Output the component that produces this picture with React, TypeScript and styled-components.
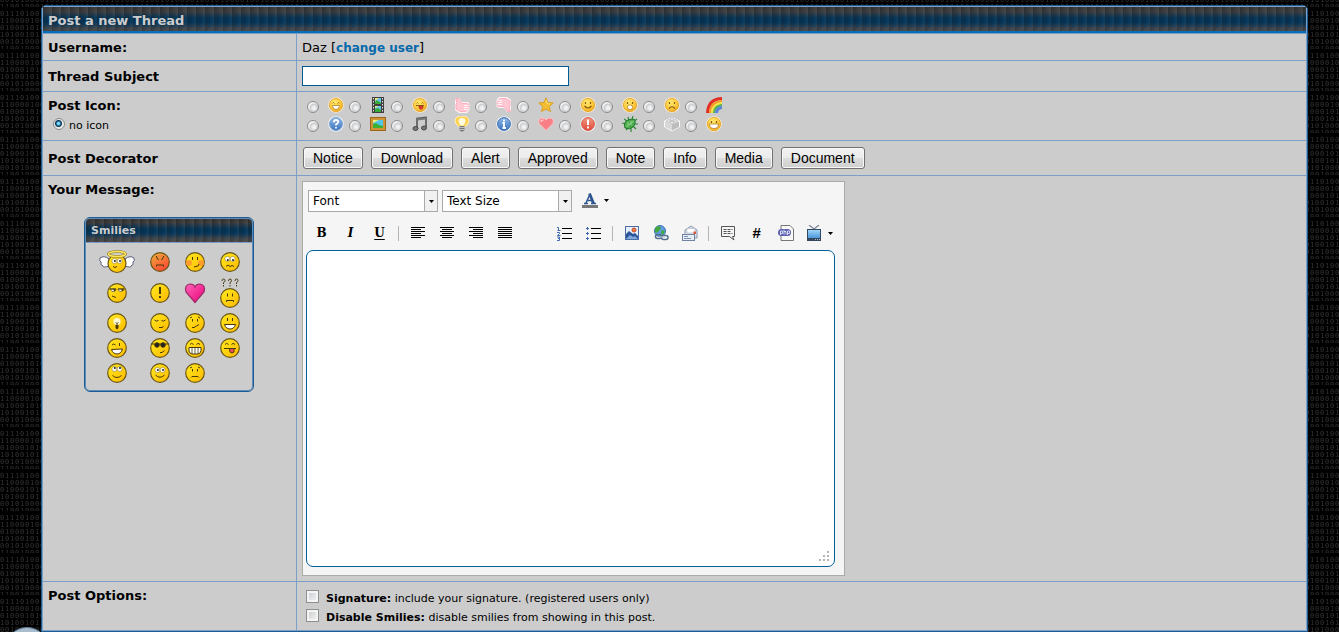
import React from 'react';
import styled, { createGlobalStyle, css } from 'styled-components';

const digitRows = ['0111010011', '1100001001', '0100010100', '1010010110', '0010100001', '1100100010'];

const digitTile = `<svg xmlns='http://www.w3.org/2000/svg' width='50' height='42'><rect width='50' height='42' fill='black'/><g font-family='DejaVu Sans Mono, monospace' font-size='7' fill='rgb(50,50,50)'>${digitRows
  .map((row, r) => `<text y='${9 + r * 7}' x='${row.split('').map((_, i) => i * 5).join(' ')}'>${row}</text>`)
  .join('')}</g></svg>`;

const GlobalStyle = createGlobalStyle`
  *, *::before, *::after { box-sizing: border-box; }
  body {
    margin: 0;
    padding: 5px 31px 0 41px;
    color: #000;
    font-family: Verdana, "DejaVu Sans", sans-serif;
    font-size: 13px;
    line-height: 16px;
    background: #000 url("data:image/svg+xml,${encodeURIComponent(digitTile)}") 0 7px;
  }
`;

const ribbed = css`
  background:
    linear-gradient(100deg, rgba(0, 10, 20, 0.4), rgba(0, 10, 20, 0) 70%) 0 0 / 9px 100%,
    radial-gradient(ellipse 6px 9px at 50% 52%, rgba(0, 50, 88, 0.75), rgba(0, 50, 88, 0)) 0 0 / 9px 100%,
    linear-gradient(#48423f, #474849 20%, #14405d 42%, #104164 58%, #454a4f 82%, #4f4b49);
  color: #ccc;
  font-weight: bold;
`;

const Panel = styled.form`
  border: 1px solid #1b5c93;
  border-radius: 5px 5px 0 0;
  background: #ccc;
  overflow: hidden;
`;

const PanelInner = styled.div`
  border: 1px solid #7c9fca;
  border-radius: 4px 4px 0 0;
`;

const Title = styled.h1`
  ${ribbed}
  margin: 0;
  height: 27px;
  padding: 6px 5px 0;
  border-bottom: 1px solid #7c9fca;
  box-shadow: inset 0 -2px #0670b8;
  font-size: 13px;
  line-height: 16px;
`;

const Row = styled.div<{ $center?: boolean }>`
  display: grid;
  grid-template-columns: 254px minmax(0, 1fr);
  border-bottom: 1px solid #7c9fca;
  &:last-child { border-bottom: 0; }
  > :first-child { ${p => p.$center && 'align-content: center;'} }
`;

const LabelCell = styled.div`
  padding: 6px 5px 4px;
  border-right: 1px solid #7c9fca;
  font-weight: bold;
`;

const Cell = styled.div<{ $kind?: 'text' | 'buttons' }>`
  padding: ${p => (p.$kind === 'text' ? '6px 5px 4px' : p.$kind === 'buttons' ? '6px 5px' : '5px')};
`;

const UserLink = styled.a`
  color: #0569ab;
  font-size: 12px;
  font-weight: bold;
  text-decoration: none;
`;

const Subject = styled.input`
  display: block;
  width: 267px;
  height: 20px;
  border: 1px solid #005d94;
  background: #fff;
  font: inherit;
`;

const Radio = styled.input`
  appearance: none;
  flex: none;
  margin: 0;
  width: 12px;
  height: 12px;
  border: 1px solid #8b8b8b;
  border-radius: 50%;
  background: radial-gradient(circle at 60% 60%, #f4f4f4 1px, #c9cccf 4px, #f3f3f3 5px);
  &:checked { background: radial-gradient(circle at 45% 45%, #8fdcf8 0 1px, #1a7eb4 2px, #10304c 3px, #e8e8e8 4px); }
`;

const Check = styled.input`
  appearance: none;
  flex: none;
  margin: 0 7px 0 4px;
  width: 13px;
  height: 13px;
  border: 1px solid #8e8f8f;
  background: linear-gradient(135deg, #c6cacf, #f6f6f6);
  box-shadow: inset 0 0 0 2px #f4f4f4;
`;

const NoIcon = styled.label`
  display: flex;
  align-items: center;
  gap: 4px;
  height: 19px;
  padding-left: 5px;
  font-size: 11px;
  font-weight: normal;
  span { padding-top: 4px; }
`;

const IconGrid = styled.div`
  display: grid;
  grid-template-columns: repeat(10, 42px);
  grid-auto-rows: 19px;
  padding-left: 5px;
`;

const IconChoice = styled.label`
  display: flex;
  align-items: flex-end;
  gap: 9px;
  padding-bottom: 3px;
`;

const Buttons = styled.div`
  display: flex;
  flex-wrap: wrap;
  gap: 8px;
  padding-left: 1px;
`;

const Button = styled.button`
  height: 22px;
  padding: 0 9px;
  border: 1px solid #707070;
  border-radius: 3px;
  background: linear-gradient(#f2f2f2, #ebebeb 50%, #dddddd 50%, #cfcfcf);
  box-shadow: inset 0 0 0 1px #f8f8f8;
  color: #000;
  font: 14px/18px Arial, "Liberation Sans", sans-serif;
`;

const SmiliePanel = styled.section`
  width: 170px;
  margin: 19px 0 0 36px;
  border: 1px solid #1b5c93;
  border-radius: 6px;
  box-shadow: inset 0 0 0 1px #5d8cbb;
  overflow: hidden;
`;

const SmilieTitle = styled.h2`
  ${ribbed}
  margin: 1px 1px 0;
  height: 24px;
  padding: 4px 5px;
  border-bottom: 1px solid #7c9fca;
  border-radius: 4px 4px 0 0;
  font-size: 11px;
  line-height: 16px;
`;

const SmilieGrid = styled.div`
  display: grid;
  grid-template-columns: 36px repeat(3, 20px);
  grid-template-rows: 22px 30px repeat(3, 20px);
  column-gap: 15px;
  row-gap: 5px;
  place-items: center;
  padding: 8px 14px;
  svg { display: block; overflow: visible; }
`;

const Editor = styled.div`
  display: flex;
  flex-direction: column;
  width: 543px;
  height: 395px;
  padding: 8px 9px 8px 3px;
  border: 1px solid #aaa;
  background: #f5f5f5;
`;

const ToolRow = styled.div`
  display: flex;
  gap: 4px;
  height: 22px;
  padding-left: 2px;
`;

const SelectBox = styled.label`
  display: grid;
  grid-template-columns: 116px 12px;
  align-items: center;
  justify-items: center;
  width: 130px;
  border: 1px solid #aaa;
  background: linear-gradient(90deg, #fff 115px, #aaa 115px, #aaa 116px, #f1f1f1 116px);
  > * { grid-row: 1; }
  svg { grid-column: 2; }
`;

const Select = styled.select`
  appearance: none;
  grid-column: 1 / -1;
  justify-self: stretch;
  height: 20px;
  padding: 0 4px;
  border: 0;
  background: transparent;
  color: #000;
  font: 12px/16px Verdana, "DejaVu Sans", sans-serif;
`;

const Tools = styled.div`
  display: flex;
  align-items: center;
  height: 32px;
  margin: 5px 0 1px;
  padding-left: 1px;
`;

const Tool = styled.button<{ $menu?: boolean }>`
  display: flex;
  flex: none;
  align-items: center;
  justify-content: ${p => (p.$menu ? 'flex-start' : 'center')};
  gap: 6px;
  width: ${p => (p.$menu ? 33 : 29)}px;
  height: 20px;
  padding: ${p => (p.$menu ? '0 0 0 6px' : '0')};
  border: 0;
  background: none;
`;

const Divider = styled.span`
  flex: none;
  width: 1px;
  height: 15px;
  margin: 0 4px;
  background: #b4b4b4;
`;

const Space = styled.span`
  flex: none;
  width: 31px;
`;

const MessageWrap = styled.div`
  position: relative;
  flex: 1;
  svg { position: absolute; right: 6px; bottom: 6px; }
`;

const Message = styled.textarea`
  display: block;
  width: 100%;
  height: 100%;
  padding: 6px;
  border: 1px solid #00609a;
  border-radius: 7px;
  background: #fff;
  resize: none;
  font: inherit;
`;

const Option = styled.label`
  display: flex;
  align-items: center;
  height: 19px;
  font-size: 11px;
  line-height: 14px;
  span { padding-top: 5px; }
`;

const Orb = styled.div`
  position: fixed;
  left: 5px;
  bottom: 0;
  width: 44px;
  height: 5px;
  overflow: hidden;
  svg { display: block; }
`;

type G = { children: React.ReactNode };

const Svg = ({ w = 16, h = 16, children }: { w?: number; h?: number; children: React.ReactNode }) => (
  <svg width={w} height={h} viewBox={`0 0 ${w} ${h}`} fill="none" aria-hidden="true">{children}</svg>
);

const HiddenSvg = styled.svg`
  position: absolute;
`;

const Defs = () => (
  <HiddenSvg width="0" height="0" aria-hidden="true">
    <defs>
      <radialGradient id="gold" cx="40%" cy="30%" r="75%"><stop offset="0" stopColor="#ffe96e" /><stop offset=".65" stopColor="#fcc93d" /><stop offset="1" stopColor="#eba41c" /></radialGradient>
      <linearGradient id="yellow" x1="0" y1="0" x2="1" y2="1"><stop offset="0" stopColor="#ffea20" /><stop offset="1" stopColor="#ffb900" /></linearGradient>
      <linearGradient id="angry" x1="0" y1="0" x2=".6" y2="1"><stop offset="0" stopColor="#e8b33a" /><stop offset="1" stopColor="#ff4a35" /></linearGradient>
      <linearGradient id="blue" x1="0" y1="0" x2="0" y2="1"><stop offset="0" stopColor="#8fb8e8" /><stop offset="1" stopColor="#3b74bd" /></linearGradient>
      <linearGradient id="redc" x1="0" y1="0" x2="0" y2="1"><stop offset="0" stopColor="#f39b85" /><stop offset="1" stopColor="#dc4735" /></linearGradient>
      <linearGradient id="pink" x1="0" y1="0" x2="1" y2="1"><stop offset="0" stopColor="#ff65b8" /><stop offset="1" stopColor="#e90078" /></linearGradient>
      <linearGradient id="sky" x1="0" y1="0" x2="0" y2="1"><stop offset="0" stopColor="#9fd4f8" /><stop offset="1" stopColor="#4d98dc" /></linearGradient>
    </defs>
  </HiddenSvg>
);

/* Small 16px faces used as thread icons */
const Mini = ({ children }: G) => (
  <Svg>
    <circle cx="8" cy="8" r="7.8" fill="#f8ecd0" />
    <circle cx="8" cy="8" r="6.6" fill="url(#gold)" stroke="#e5a62e" strokeWidth=".9" />
    {children}
  </Svg>
);
const eyes = <path d="M5.500 5v2M10.500 5v2" stroke="#8b5a12" strokeWidth="1.200" />;
const arches = <path d="M4.500 6.500q1-2 2 0M9.500 6.500q1-2 2 0" stroke="#a06a18" strokeWidth=".9" />;

const Disc = ({ fill, ring, children }: { fill: string; ring: string; children: React.ReactNode }) => (
  <Svg>
    <circle cx="8" cy="8" r="7.800" fill="#eef1f6" />
    <circle cx="8" cy="8" r="6.400" fill={fill} stroke={ring} />
    {children}
  </Svg>
);

/* Fist with the thumb raised at the left and the fingers closed at the right */
const Hand = () => (
  <>
    <path d="M1 1h4l3 4h6l1.500 2v6L13 16H5L1 13z" fill="#fff3f5" />
    <path d="M1.500 1.500h3L8 6.500h5q2 .5 1.500 2 1 1 0 2 .5 1.500-1 2-.5 2-2 2H6L2 12V7l1-1z" fill="#ffc8d3" stroke="#f9a5b4" strokeWidth=".8" />
    <path d="M10 8.500h4.500M10 10.500h4.500M10 12.500h3.500" stroke="#fff" strokeWidth=".8" />
  </>
);

const postIcons: [string, React.ReactNode][] = [
  ['Grin', <Mini>{arches}<path d="M4.500 8.500h7q0 4-3.500 4t-3.500-4z" fill="#fff" stroke="#b57d25" strokeWidth=".8" /></Mini>],
  ['Film', <Svg><path d="M2 0v16h12V0z" fill="#404040" /><path d="M5 1h6v6H5zM5 9h6v6H5z" fill="#65c7ed" /><path d="M5 5l2-2 4 3v1H5zM5 12l3-1 3 2v2H5z" fill="#38aa3a" /><path d="M5 1h4L5 4zM5 9h4l-4 2z" fill="#f0e87b" /><path d="M3.500 1v15M12.500 1v15" stroke="#ddd" strokeDasharray="1.500 1.500" /></Svg>],
  ['Tongue', <Mini>{arches}<path d="M4 8.500h8" stroke="#8b5a12" /><path d="M7 9h4v2q-2 3-4 0z" fill="#df3e30" stroke="#a83424" strokeWidth=".6" /></Mini>],
  ['Thumbs up', <Svg><Hand /></Svg>],
  ['Thumbs down', <Svg><g transform="translate(16 16) scale(-1 -1)"><Hand /></g></Svg>],
  ['Star', <Svg><path d="M8 .8l2 4.700 5.200.5-3.900 3.600 1.200 5L8 12l-4.500 2.600 1.200-5L.8 6l5.200-.5z" fill="#f3bd32" stroke="#d99f27" strokeWidth="1" strokeLinejoin="round" /><path d="M8 3l1 3.500 3 .5" stroke="#ffe27a" /></Svg>],
  ['Smile', <Mini>{eyes}<path d="M4.500 9q3.500 4 7 0" stroke="#8b5a12" strokeWidth="1.200" /></Mini>],
  ['Surprised', <Mini>{eyes}<rect x="5.500" y="8" width="5" height="4.500" rx="2" fill="#fff" stroke="#b57d25" strokeWidth=".8" /></Mini>],
  ['Sad', <Mini>{eyes}<path d="M5 11.500q3-3.500 6 0" stroke="#8b5a12" strokeWidth="1.200" /></Mini>],
  ['Rainbow', <Svg><path d="M1.500 16Q2 2 16 1.500" stroke="#e12f24" strokeWidth="3" /><path d="M4 16Q4.500 5 16 4" stroke="#f79a1f" strokeWidth="2" /><path d="M6 16Q6 7 16 6" stroke="#f5e443" strokeWidth="2" /><path d="M8 16Q8 9 16 8" stroke="#4fb247" strokeWidth="2" /><path d="M10.500 16Q10.500 11 16 10.500" stroke="#5b83d7" strokeWidth="3" /></Svg>],
  ['Question', <Disc fill="url(#blue)" ring="#6f9bd0"><path d="M5.800 6.300Q6 4 8 4t2.200 2Q10 7.500 8 8.500v1M8 11v1.500" stroke="#fff" strokeWidth="1.800" /></Disc>],
  ['Picture', <Svg><rect y="1" width="16" height="14" fill="#9c6518" /><rect x="1" y="2" width="14" height="12" fill="#cf9436" /><rect x="3" y="4" width="10" height="8" fill="#53c5e8" /><path d="M3 8l3-1 3 2 4 1v2H3z" fill="#3caf35" /><path d="M3 4h6L3 7z" fill="#eef37c" /></Svg>],
  ['Music', <Svg><path d="M5 12V2.500l9-1V11" stroke="#555" strokeWidth="1.600" /><path d="M5 3.500l9-1" stroke="#777" strokeWidth="2" /><ellipse cx="3.500" cy="12.500" rx="2.500" ry="2" fill="#777" stroke="#444" /><ellipse cx="12" cy="12" rx="2.500" ry="2" fill="#777" stroke="#444" /></Svg>],
  ['Idea', <Svg><path d="M1 5q0-5 7-5t7 5q0 3-4 5.500H5Q1 8 1 5z" fill="#ffd04f" stroke="#fff0bb" /><path d="M4.500 5Q4.500 2 8 2t3.500 3q0 2-2 4.500h-3Q4.500 7 4.500 5z" fill="#fffce0" /><path d="M5.500 10h5v4L9 15.500H7L5.500 14z" fill="#777" /><path d="M5.500 11.500h5M5.500 13.500h5" stroke="#ddd" strokeWidth=".7" /></Svg>],
  ['Information', <Disc fill="url(#blue)" ring="#3f72b0"><path d="M8 3.500v2M6.500 7H8v4.500M6.500 12h3.500" stroke="#fff" strokeWidth="1.800" /></Disc>],
  ['Heart', <Svg><path d="M8 14.500L1 7.500Q-.5 2.500 4.500 2 7 2 8 4q1-2 3.500-2 5 .5 3.500 5.500z" fill="#f77f85" stroke="#fbc5c8" /><path d="M3 6q0-2 2.500-2" stroke="#ffc6c8" strokeWidth="1.500" /></Svg>],
  ['Exclamation', <Disc fill="url(#redc)" ring="#dc5744"><path d="M8 3.500v5.500M8 10.500v2" stroke="#fff" strokeWidth="2" /></Disc>],
  ['Bug', <Svg><path d="M2 3l3 2M6 1l1 4M11 0l-1 4M15 3l-3 2M16 8h-4M14 13l-3-3M9 16v-4M4 14l2-2M0 7l4 1" stroke="#2c8a36" strokeWidth="1.200" /><path d="M3 12Q1 6 6 4t7 0q1 4-2 7t-8 1z" fill="#4cae4d" stroke="#21762a" /><path d="M4 11l8-6M6 6v3.500M9 5v4" stroke="#a5dba0" strokeWidth=".8" /></Svg>],
  ['Brick', <Svg><path d="M.5 5L8 1.500 15.500 5v6L8 15 .5 11z" fill="#ececec" stroke="#fff" strokeWidth=".8" /><path d="M8 8.500L15 5.500V11l-7 3.500z" fill="#bdbdbd" /><path d="M1 5.500l7 3v6L1 11z" fill="#d8d8d8" /><ellipse cx="4.500" cy="5" rx="1.800" ry="1.200" fill="#fafafa" stroke="#a4a4a4" strokeWidth=".7" /><ellipse cx="8" cy="3.200" rx="1.800" ry="1.200" fill="#fafafa" stroke="#a4a4a4" strokeWidth=".7" /><ellipse cx="11.500" cy="5" rx="1.800" ry="1.200" fill="#fafafa" stroke="#a4a4a4" strokeWidth=".7" /><ellipse cx="8" cy="6.600" rx="1.800" ry="1.200" fill="#fafafa" stroke="#a4a4a4" strokeWidth=".7" /></Svg>],
  ['Big smile', <Mini>{eyes}<path d="M3.500 8h9q0 4.500-4.500 4.500T3.500 8z" fill="#fff" stroke="#b57d25" strokeWidth=".8" /></Mini>],
];

/* Larger 20px smilies for the side panel */
const Face = ({ fill = 'url(#yellow)', children }: { fill?: string; children: React.ReactNode }) => (
  <Svg w={20} h={20}>
    <circle cx="10" cy="10" r="9.300" fill={fill} stroke="#6b5714" strokeWidth="1.200" />
    <g stroke="#46390a" strokeWidth="1">{children}</g>
  </Svg>
);
const dotEyes = <path d="M7.500 5v3M12.500 5v3" />;
const Goggle = ({ x = 10, y = 7, look = 1 }: { x?: number; y?: number; look?: number }) => (
  <>
    <circle cx={x - 2.600} cy={y} r="2.500" fill="#fff" stroke="#7d6a20" strokeWidth=".5" />
    <circle cx={x + 2.600} cy={y} r="2.500" fill="#fff" stroke="#7d6a20" strokeWidth=".5" />
    <circle cx={x - 2.200} cy={y + look} r="1" fill="#222" stroke="none" />
    <circle cx={x + 3} cy={y + look} r="1" fill="#222" stroke="none" />
  </>
);

const smilies: [string, React.ReactNode][] = [
  ['angel', <Svg w={36} h={22}><path d="M10 8Q5 4 1 7q-1 3 1 4-1 3 2 4 0 2 6 0zM26 8q5-4 9-1 1 3-1 4 1 3-2 4 0 2-6 0z" fill="#fff" stroke="#565c78" /><circle cx="18" cy="12.500" r="9" fill="url(#yellow)" stroke="#6b5714" strokeWidth="1.200" /><path d="M10 2.500h16v2H10z" fill="#ccc" /><ellipse cx="18" cy="3" rx="8.500" ry="2.500" stroke="#8a7420" strokeWidth="2.600" /><ellipse cx="18" cy="3" rx="8.500" ry="2.500" stroke="#ffe75c" strokeWidth="1.400" /><Goggle x={18} y={10} look={0} /><path d="M14 15.500q2 2 4 0" stroke="#46390a" /></Svg>],
  ['angry', <Face fill="url(#angry)"><path d="M6.500 4v1l2 3M13.500 4v1l-2 3M6.500 14.500V13h7v1.500" /></Face>],
  ['blush', <Face><circle cx="4" cy="11" r="3" fill="#ff9d2c" stroke="none" /><circle cx="16" cy="11" r="3" fill="#ff9d2c" stroke="none" />{dotEyes}<path d="M9 15l4-1 1-2" /></Face>],
  ['confused', <Face><Goggle /><path d="M6 14.500l2-1.500 2 1.500 2-1 2 1" /></Face>],
  ['dodgy', <Face><path d="M3 6h6v1q-1 2.500-4 1.500zM11 6h6q-1 3-4 2.500L11 7z" fill="#fff" strokeWidth=".6" /><path d="M2.500 6H9M11 6h6.500" strokeWidth="1.200" /><path d="M7.500 6v2M15.500 6v2" strokeWidth="1.600" /><path d="M5 13l4 1.500" /></Face>],
  ['exclamation', <Face><path d="M10 4v7M10 13v2" strokeWidth="2" /></Face>],
  ['heart', <Svg w={20} h={20}><path d="M10 19.500L1 9Q-1 2 5 1q4 0 5 3 1-3 5-3 6 1 4 8z" fill="url(#pink)" stroke="#9d2968" strokeWidth="1.200" /></Svg>],
  ['huh', <Svg w={20} h={30}><path d="M2 3q0-2 1.500-2T5 2.500Q5 4 3.500 4.500V6M3.500 7v1.500M8.500 3q0-2 1.500-2t1.500 1.500q0 1.500-1.500 2V6M10 7v1.500M15 3q0-2 1.500-2T18 2.500q0 1.500-1.500 2V6M16.500 7v1.500" stroke="#4b3d18" /><circle cx="10" cy="20" r="9.300" fill="url(#yellow)" stroke="#6b5714" strokeWidth="1.200" /><path d="M7.500 15.500v3M12.500 15.500v3M6.500 24v-1.500h7V24" stroke="#46390a" /></Svg>],
  ['idea', <Face><circle cx="10" cy="8.500" r="4" fill="#fffbd8" stroke="#f7cf20" strokeWidth=".8" /><path d="M8.500 9.500l1.500 1 1.500-1" strokeWidth=".8" /><path d="M8.500 12h3v3L10 16.500 8.500 15zM9.500 10.500h1V13h-1z" fill="#46390a" stroke="none" /></Face>],
  ['shy', <Face><path d="M4.500 7q1.500 2 4 .5M11.500 7.500q2 1.500 4-.5M9 14.500h3l1.500-1" /></Face>],
  ['undecided', <Face><path d="M5 5l2-1M13 4l2 1M7.500 6v2.500M12.500 6v2.500M7 14.500h2l5-3" /></Face>],
  ['smile', <Face>{dotEyes}<path d="M4.500 11.500h11Q14 16 10 16t-5.500-4.500z" fill="#fff" /></Face>],
  ['wink', <Face><path d="M5 7q1.500-2 3.500 0M12.500 5v3" /><path d="M4.500 11.500l11-.5Q14 16 10 16t-5.500-4.500z" fill="#fff" /></Face>],
  ['cool', <Face><path d="M1 6h18" /><circle cx="7" cy="7" r="2.300" fill="#222" /><circle cx="13" cy="7" r="2.300" fill="#222" /><path d="M10 14.500h2l2.500-2" /></Face>],
  ['biggrin', <Face><path d="M5 6.500q1.500-2.500 3.500 0M11.500 6.500q1.500-2.500 3.500 0" /><path d="M4 9.500h12V13q-1 3-3 3H7q-2 0-3-3z" fill="#fff" /><path d="M7 9.500V16M10 9.500V16M13 9.500V16" strokeWidth=".8" /></Face>],
  ['tongue', <Face><path d="M5 6.500q1.500-2.500 3.500 0M11.500 6.500q1.500-2.500 3.500 0M4 10.500h12" /><path d="M9.500 10.500h4.500V14q-2 2-4 0z" fill="#f54f5e" /></Face>],
  ['rolleyes', <Face><Goggle y={6} look={-1} /><path d="M5.500 12.500q4.500 4 9 0" /></Face>],
  ['happy', <Face><Goggle look={0} /><path d="M5.500 12q4.500 4.500 9 0" /></Face>],
  ['sad', <Face><path d="M5 5l2-1M13 4l2 1M7.500 6v2.500M12.500 6v2.500M6 14.500l1-1h6l1 1" /></Face>],
];

const Caret = () => <Svg w={5} h={3}><path d="M0 0h5L2.500 3z" fill="#000" /></Svg>;

const AlignIcon = ({ kind }: { kind: 'left' | 'center' | 'right' | 'full' }) => (
  <Svg w={14} h={12}>
    {[0, 1, 2, 3, 4, 5].map(i => {
      const w = kind === 'full' || i % 2 === 0 ? 14 : 10;
      const x = kind === 'right' ? 14 - w : kind === 'center' ? (14 - w) / 2 : 0;
      return <rect key={i} x={x} y={i * 2} width={w} height="1" fill="#000" />;
    })}
  </Svg>
);

const Letter = styled.span<{ $kind: 'b' | 'i' | 'u' | 'hash' }>`
  color: #000;
  font: bold 12px/16px "DejaVu Serif", serif;
  ${p => p.$kind === 'i' && 'font-style: italic;'}
  ${p => p.$kind === 'u' && 'text-decoration: underline; text-underline-offset: 2px;'}
  ${p => p.$kind === 'hash' && 'font-family: "Liberation Sans", sans-serif; font-size: 15px; font-style: italic;'}
`;

const FontColor = () => (
  <Svg>
    <path d="M2 11.500h4M9 11.500h5M4 11L8 2M5.500 8.500H11" stroke="#2d5590" strokeWidth="1.500" />
    <path d="M7.500 1.500l4 10" stroke="#2d5590" strokeWidth="2.800" />
    <rect y="13" width="16" height="3" fill="#777" />
  </Svg>
);

const ListIcon = ({ ordered }: { ordered?: boolean }) => (
  <Svg w={15} h={15}>
    <path d="M5 2.500h10M5 7.500h10M5 12.500h10" stroke="#000" />
    {ordered
      ? <path d="M0 1.500h1.500V4M.5 4.500h3M0 6.500h2.500v1L.5 9.500h3M0 11h2.500v1.500H1h1.500v2H0" stroke="#4069b4" />
      : <path d="M0 2.500h3M1.500 1v3M0 7.500h3M1.500 6v3M0 12.500h3M1.500 11v3" stroke="#4069b4" />}
  </Svg>
);

const PictureIcon = () => <Svg><rect x="1.500" y="1.500" width="13" height="13" fill="#e6effb" stroke="#4c6fa5" /><path d="M2 14V9l3-3 4 3 2-1 3 3v3z" fill="#2e5596" /><path d="M2 14l4-4 3 2 2-1 3 3z" fill="#7faae0" /><circle cx="10" cy="5" r="2" fill="#f4803c" stroke="#c5482a" /></Svg>;
const LinkIcon = () => <Svg><circle cx="7" cy="6" r="5.500" fill="#5f9ee0" stroke="#3c72b1" /><path d="M3 2q4-2 5 1L6 6 3 8 1.500 5zM9 5l3 1-2 4-2-2z" fill="#43a83c" /><rect x="2.500" y="9.500" width="6" height="4" rx="2" stroke="#55708d" strokeWidth="1.500" /><rect x="8.500" y="10.500" width="6.500" height="4" rx="2" stroke="#55708d" strokeWidth="1.500" /><path d="M6 12h6" stroke="#bccbdc" /></Svg>;
const MailIcon = () => <Svg><path d="M3 5l6-4 6 4v8H3z" fill="#dfe4ec" stroke="#8b99b0" /><path d="M5 3.500h8V8H5z" fill="#fff" stroke="#b4bccb" strokeWidth=".7" /><rect x="11.500" y="6.500" width="2.500" height="2.500" fill="#dd5436" /><rect x=".5" y="9.500" width="12" height="6" fill="#e7eef8" stroke="#7083a3" /><path d="M2 11.500h4M2 13.500h7" stroke="#7d91b1" /></Svg>;
const QuoteIcon = () => <Svg><path d="M1.500 1.500h13v10h-2l1.500 3.500-4.500-3.500h-8z" fill="#f5f5f5" stroke="#555" /><path d="M3.500 4.500h9M3.500 6.500h8M3.500 8.500h9" stroke="#555" strokeDasharray="3 1" /></Svg>;
const PhpIcon = () => <Svg><path d="M3 .5h9l3.500 3.500v11.500H3z" fill="#f9f9f9" stroke="#777" /><rect x="0" y="4" width="13" height="7" rx="3.500" fill="#5b61ae" /><path d="M2.500 10V6h2v2.500h-2M6 4.500v5M6 6.500h2v3M9.500 10V6h2v2.500h-2" stroke="#dfe1f5" strokeWidth=".9" /></Svg>;
const TvIcon = () => <Svg><path d="M3 0l5 4 5-4" stroke="#7b8798" strokeWidth="1.300" /><rect x="1" y="4" width="14" height="12" fill="#36485e" /><rect x="2" y="5" width="12" height="8" fill="url(#sky)" /><path d="M9 14.500h5" stroke="#aab6c2" strokeDasharray="1 1" /></Svg>;

const decorators = ['Notice', 'Download', 'Alert', 'Approved', 'Note', 'Info', 'Media', 'Document'];

export default function App() {
  return (
    <>
      <GlobalStyle />
      <Defs />
      <Panel onSubmit={e => e.preventDefault()}>
        <PanelInner>
          <Title>Post a new Thread</Title>
          <Row>
            <LabelCell>Username:</LabelCell>
            <Cell $kind="text">Daz [<UserLink href="#user">change user</UserLink>]</Cell>
          </Row>
          <Row $center>
            <LabelCell><label htmlFor="subject">Thread Subject</label></LabelCell>
            <Cell><Subject id="subject" type="text" /></Cell>
          </Row>
          <Row>
            <LabelCell>
              Post Icon:
              <NoIcon><Radio type="radio" name="icon" defaultChecked /><span>no icon</span></NoIcon>
            </LabelCell>
            <Cell>
              <IconGrid>
                {postIcons.map(([name, icon]) => (
                  <IconChoice key={name}><Radio type="radio" name="icon" aria-label={name} />{icon}</IconChoice>
                ))}
              </IconGrid>
            </Cell>
          </Row>
          <Row $center>
            <LabelCell>Post Decorator</LabelCell>
            <Cell $kind="buttons">
              <Buttons>{decorators.map(d => <Button type="button" key={d}>{d}</Button>)}</Buttons>
            </Cell>
          </Row>
          <Row>
            <LabelCell>
              <label htmlFor="message">Your Message:</label>
              <SmiliePanel>
                <SmilieTitle>Smilies</SmilieTitle>
                <SmilieGrid>
                  {smilies.map(([name, icon]) => <React.Fragment key={name}>{icon}</React.Fragment>)}
                </SmilieGrid>
              </SmiliePanel>
            </LabelCell>
            <Cell>
              <Editor>
                <ToolRow>
                  <SelectBox><Select aria-label="Font"><option>Font</option></Select><Caret /></SelectBox>
                  <SelectBox><Select aria-label="Text size"><option>Text Size</option></Select><Caret /></SelectBox>
                  <Tool type="button" $menu aria-label="Text colour"><FontColor /><Caret /></Tool>
                </ToolRow>
                <Tools>
                  <Tool type="button"><Letter $kind="b">B</Letter></Tool>
                  <Tool type="button"><Letter $kind="i">I</Letter></Tool>
                  <Tool type="button"><Letter $kind="u">U</Letter></Tool>
                  <Divider />
                  <Tool type="button" aria-label="Align left"><AlignIcon kind="left" /></Tool>
                  <Tool type="button" aria-label="Align center"><AlignIcon kind="center" /></Tool>
                  <Tool type="button" aria-label="Align right"><AlignIcon kind="right" /></Tool>
                  <Tool type="button" aria-label="Justify"><AlignIcon kind="full" /></Tool>
                  <Space />
                  <Tool type="button" aria-label="Numbered list"><ListIcon ordered /></Tool>
                  <Tool type="button" aria-label="Bulleted list"><ListIcon /></Tool>
                  <Divider />
                  <Tool type="button" aria-label="Insert image"><PictureIcon /></Tool>
                  <Tool type="button" aria-label="Insert link"><LinkIcon /></Tool>
                  <Tool type="button" aria-label="Insert email"><MailIcon /></Tool>
                  <Divider />
                  <Tool type="button" aria-label="Quote"><QuoteIcon /></Tool>
                  <Tool type="button" aria-label="Code"><Letter $kind="hash">#</Letter></Tool>
                  <Tool type="button" aria-label="PHP code"><PhpIcon /></Tool>
                  <Tool type="button" $menu aria-label="Insert video"><TvIcon /><Caret /></Tool>
                </Tools>
                <MessageWrap>
                  <Message id="message" />
                  <Svg w={10} h={10}><path d="M8 0h2v2H8zM4 4h2v2H4zM8 4h2v2H8zM0 8h2v2H0zM4 8h2v2H4zM8 8h2v2H8z" fill="#b4b4b4" /></Svg>
                </MessageWrap>
              </Editor>
            </Cell>
          </Row>
          <Row>
            <LabelCell>Post Options:</LabelCell>
            <Cell>
              <Option><Check type="checkbox" /><span><b>Signature:</b> include your signature. (registered users only)</span></Option>
              <Option><Check type="checkbox" /><span><b>Disable Smilies:</b> disable smilies from showing in this post.</span></Option>
            </Cell>
          </Row>
        </PanelInner>
      </Panel>
      <Orb>
        <Svg w={44} h={44}><circle cx="22" cy="22" r="21.500" fill="#a9bccd" stroke="#5f7d9b" /></Svg>
      </Orb>
    </>
  );
}
